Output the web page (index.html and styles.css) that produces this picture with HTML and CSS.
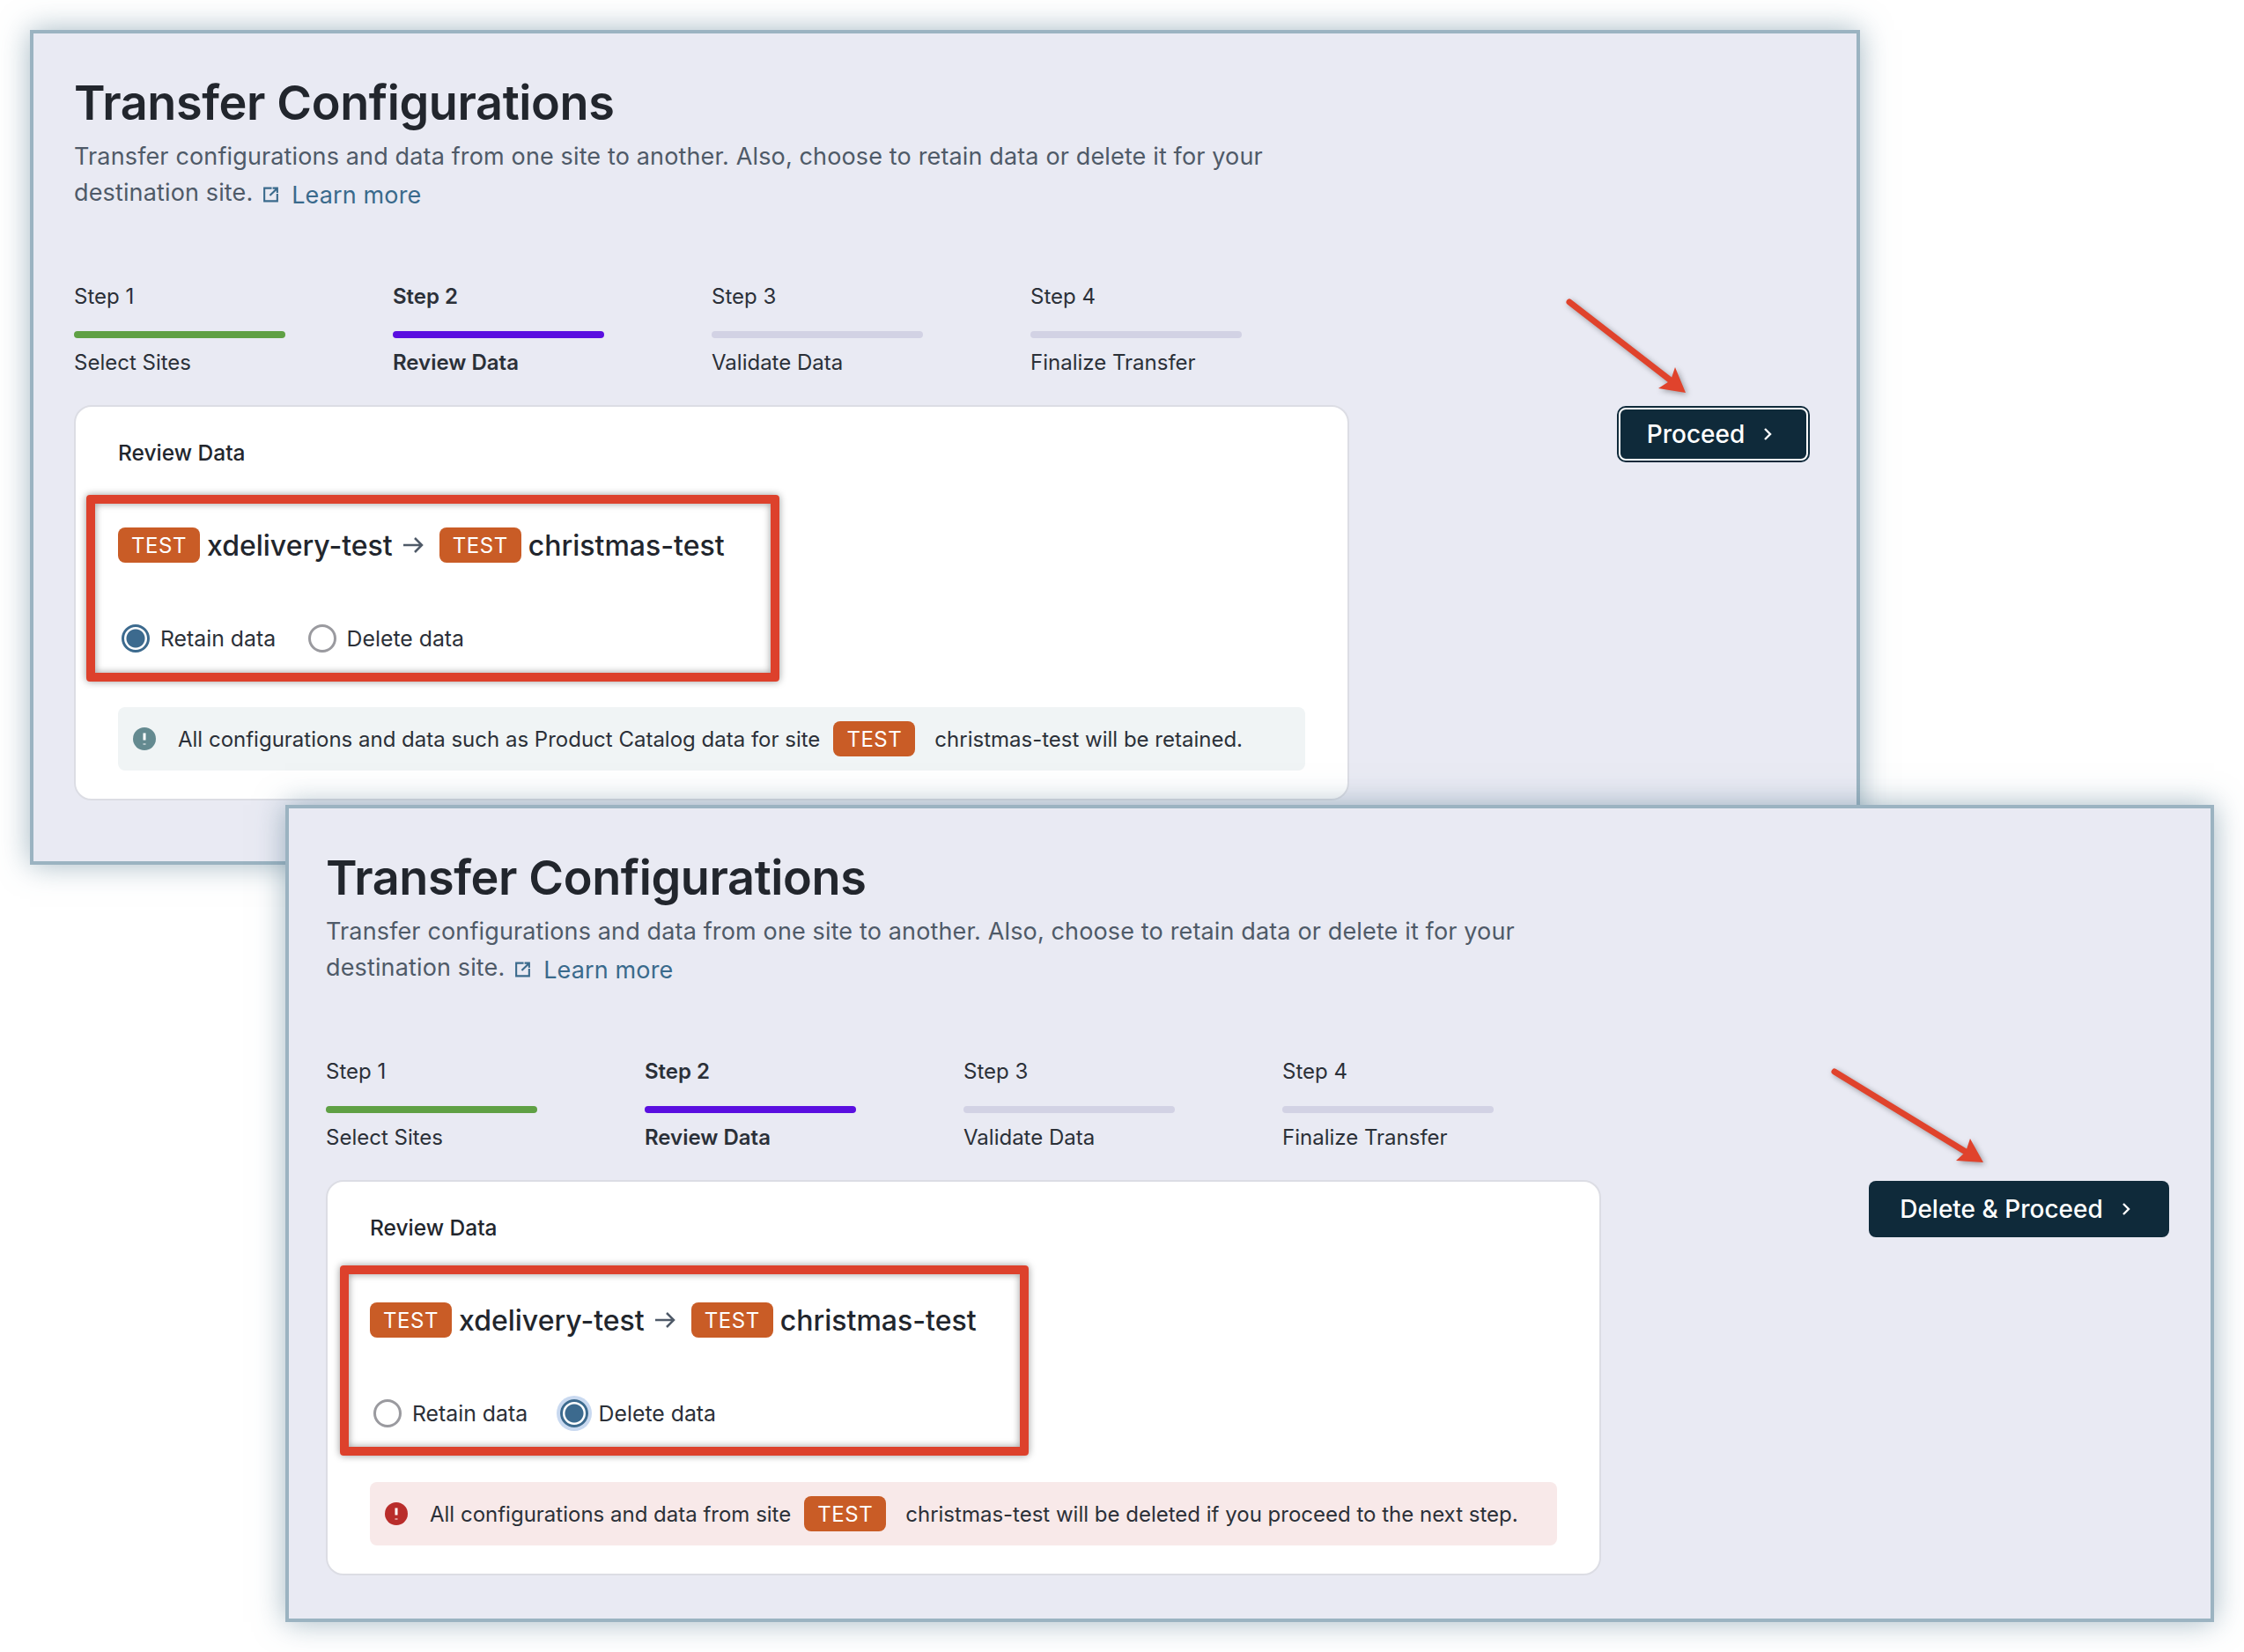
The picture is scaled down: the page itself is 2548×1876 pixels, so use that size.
FILE: index.html
```html
<!DOCTYPE html>
<html lang="en">

<head>
    <meta charset="UTF-8">
    <title>Transfer Configurations</title>
    <link rel="stylesheet" href="styles.css">
</head>

<body>
    <div class="window window-retain">
        <h1 class="title">Transfer Configurations</h1>
        <p class="intro">Transfer configurations and data from one site to another. Also, choose to retain data or delete it for your<br>destination site. <a class="learn" href="#"><svg class="ext" viewBox="0 0 20 20"><path d="M11 3H3v14h14V9M9 11l8-8M12 3h5v5"/></svg>Learn more</a></p>
        <div class="steps">
            <div class="step done"><p>Step 1</p><div class="bar"></div><p class="name">Select Sites</p></div>
            <div class="step active"><p>Step 2</p><div class="bar"></div><p class="name">Review Data</p></div>
            <div class="step"><p>Step 3</p><div class="bar"></div><p class="name">Validate Data</p></div>
            <div class="step"><p>Step 4</p><div class="bar"></div><p class="name">Finalize Transfer</p></div>
        </div>
        <div class="row">
            <div class="card">
                <h2 class="card-title">Review Data</h2>
                <div class="transfer">
                    <span class="badge">TEST</span><span class="site">xdelivery-test</span>
                    <svg class="to" viewBox="0 0 24 20"><path d="M1 10h21M14 2l8 8-8 8"/></svg>
                    <span class="badge">TEST</span><span class="site">christmas-test</span>
                </div>
                <div class="options">
                    <label class="option"><input class="radio" type="radio" name="a" checked>Retain data</label>
                    <label class="option"><input class="radio" type="radio" name="a">Delete data</label>
                </div>
                <div class="alert info">
                    <svg class="alert-icon" viewBox="0 0 26 26"><circle cx="13" cy="13" r="13"/><path d="M13 6.5v8M13 18.5v1"/></svg>
                    <span>All configurations and data such as Product Catalog data for site</span>
                    <span class="badge">TEST</span>
                    <span>christmas-test will be retained.</span>
                </div>
                <div class="mark"></div>
            </div>
            <button class="proceed ringed">Proceed<svg class="chev" viewBox="0 0 12 16"><path d="M3 2l6 6-6 6"/></svg></button>
        </div>
        <svg class="pointer" viewBox="0 0 160 130"><path class="shaft" d="M12 13L127 102"/><path class="tip" d="M144 116L132 87 127 102 113 111z"/></svg>
    </div>

    <div class="window window-delete">
        <h1 class="title">Transfer Configurations</h1>
        <p class="intro">Transfer configurations and data from one site to another. Also, choose to retain data or delete it for your<br>destination site. <a class="learn" href="#"><svg class="ext" viewBox="0 0 20 20"><path d="M11 3H3v14h14V9M9 11l8-8M12 3h5v5"/></svg>Learn more</a></p>
        <div class="steps">
            <div class="step done"><p>Step 1</p><div class="bar"></div><p class="name">Select Sites</p></div>
            <div class="step active"><p>Step 2</p><div class="bar"></div><p class="name">Review Data</p></div>
            <div class="step"><p>Step 3</p><div class="bar"></div><p class="name">Validate Data</p></div>
            <div class="step"><p>Step 4</p><div class="bar"></div><p class="name">Finalize Transfer</p></div>
        </div>
        <div class="row">
            <div class="card">
                <h2 class="card-title">Review Data</h2>
                <div class="transfer">
                    <span class="badge">TEST</span><span class="site">xdelivery-test</span>
                    <svg class="to" viewBox="0 0 24 20"><path d="M1 10h21M14 2l8 8-8 8"/></svg>
                    <span class="badge">TEST</span><span class="site">christmas-test</span>
                </div>
                <div class="options">
                    <label class="option"><input class="radio" type="radio" name="b">Retain data</label>
                    <label class="option"><input class="radio focused" type="radio" name="b" checked>Delete data</label>
                </div>
                <div class="alert danger">
                    <svg class="alert-icon" viewBox="0 0 26 26"><circle cx="13" cy="13" r="13"/><path d="M13 6.5v8M13 18.5v1"/></svg>
                    <span>All configurations and data from site</span>
                    <span class="badge">TEST</span>
                    <span>christmas-test will be deleted if you proceed to the next step.</span>
                </div>
                <div class="mark"></div>
            </div>
            <button class="proceed">Delete &amp; Proceed<svg class="chev" viewBox="0 0 12 16"><path d="M3 2l6 6-6 6"/></svg></button>
        </div>
        <svg class="pointer" viewBox="0 0 200 130"><path class="shaft" d="M13 12L162 103"/><path class="tip" d="M182 115L167 88 162 103 151 113z"/></svg>
    </div>
</body>

</html>
```
FILE: styles.css
```css
* {
    margin: 0;
    padding: 0;
    box-sizing: border-box;
    font-family: "Inter", "Liberation Sans", sans-serif;
}

body {
    background: #fff;
    height: 1876px;
    overflow: hidden;
    position: relative;
}

.window {
    position: absolute;
    background: #e9eaf3;
    border: 4px solid #9bb3c1;
    box-shadow: 0 0 32px rgba(90, 125, 145, 0.55);
    padding-top: 47px;
}

.window-retain {
    left: 34px;
    top: 34px;
    width: 2078px;
    height: 948px;
    padding-left: 46px;
    padding-right: 55px;
}

.window-delete {
    left: 324px;
    top: 914px;
    width: 2190px;
    height: 928px;
    padding-left: 42px;
    padding-right: 47px;
}

.title {
    font-size: 54px;
    line-height: 64px;
    font-weight: 600;
    color: #22262d;
    letter-spacing: -0.4px;
}

.intro {
    margin-top: 8px;
    font-size: 27px;
    line-height: 41px;
    letter-spacing: 0.14px;
    color: #4f5a68;
}

.learn {
    color: #3a6a8c;
    text-decoration: none;
    vertical-align: -3px;
}

.ext {
    width: 21px;
    height: 22px;
    margin: 0 13px 0 2px;
    vertical-align: -1px;
    fill: none;
    stroke: #3a6a8c;
    stroke-width: 2;
}

.steps {
    display: flex;
    gap: 122px;
    margin-top: 79px;
}

.step {
    width: 240px;
    font-size: 24px;
    line-height: 32px;
    color: #2b3038;
}

.bar {
    height: 8px;
    border-radius: 4px;
    margin-top: 23px;
    background: #d2d2e4;
}

.name {
    margin-top: 12px;
}

.done .bar {
    background: #5fa044;
}

.active .bar {
    background: #5a0fe0;
}

.active {
    font-weight: 600;
}

.row {
    display: flex;
    align-items: flex-start;
    justify-content: space-between;
    margin-top: 32px;
}

.card {
    position: relative;
    width: 1448px;
    height: 449px;
    background: #fff;
    border: 2px solid #dcdde4;
    border-radius: 20px;
    padding: 36px 48px 0;
}

.card-title {
    font-size: 24.5px;
    line-height: 32px;
    font-weight: 500;
    color: #22262d;
}

.transfer {
    display: flex;
    align-items: center;
    margin-top: 69px;
    height: 40px;
}

.badge {
    display: inline-block;
    width: 93px;
    height: 40px;
    line-height: 42px;
    border-radius: 8px;
    background: #c95c26;
    color: #fff;
    font-size: 24px;
    letter-spacing: 0.5px;
    text-align: center;
    flex-shrink: 0;
}

.site {
    margin-left: 8px;
    font-size: 32px;
    font-weight: 500;
    color: #22262d;
}

.to {
    width: 24px;
    height: 20px;
    margin: 0 18px 0 11px;
    fill: none;
    stroke: #4f5a68;
    stroke-width: 2.5;
}

.options {
    display: flex;
    gap: 36.5px;
    margin-top: 70px;
    padding-left: 4px;
}

.option {
    display: flex;
    align-items: center;
    gap: 12px;
    height: 32px;
    font-size: 24.8px;
    color: #2b3038;
}

.radio {
    appearance: none;
    width: 32px;
    height: 32px;
    border-radius: 50%;
    border: 3px solid #9a9a9f;
    background: #fff;
}

.radio:checked {
    border-color: #3c6a8e;
    background: radial-gradient(circle, #3c6a8e 0 10px, #fff 11px);
}

.focused {
    box-shadow: 0 0 0 4px #c9d9f0;
}

.alert {
    display: flex;
    align-items: center;
    height: 72px;
    margin-top: 62px;
    padding-left: 17px;
    border-radius: 8px;
    font-size: 24px;
    color: #2b3038;
}

.alert .badge {
    margin: 0 22px 0 15px;
}

.info {
    background: #f0f4f5;
}

.danger {
    background: #f8e9e9;
}

.alert-icon {
    width: 26px;
    height: 26px;
    margin-right: 25px;
    flex-shrink: 0;
    fill: #648a90;
    stroke: #fff;
    stroke-width: 3;
}

.alert-icon circle {
    stroke: none;
}

.danger .alert-icon {
    fill: #b92d2b;
}

.mark {
    position: absolute;
    left: 12px;
    top: 100px;
    width: 787px;
    height: 212px;
    border: 10px solid #dd412c;
    border-radius: 4px;
    box-shadow: 0 0 8px rgba(0, 0, 0, 0.4), inset 0 0 8px rgba(0, 0, 0, 0.4);
}

.window-delete .mark {
    left: 14px;
    top: 95px;
    width: 782px;
    height: 216px;
}

.proceed {
    display: flex;
    align-items: center;
    justify-content: center;
    gap: 20px;
    height: 64px;
    width: 341px;
    margin-top: 1px;
    padding-right: 8px;
    border: none;
    border-radius: 8px;
    background: #0f2a3a;
    color: #fff;
    font-size: 28px;
    font-weight: 500;
}

.ringed {
    width: 215px;
    height: 60px;
    margin-top: 3px;
    border: 2px solid #fff;
    box-shadow: 0 0 0 2px #0f2a3a;
}

.chev {
    width: 12px;
    height: 16px;
    fill: none;
    stroke: #fff;
    stroke-width: 2.4;
}

.pointer {
    position: absolute;
    filter: drop-shadow(2px 2px 3px rgba(0, 0, 0, 0.35));
}

.window-retain .pointer {
    left: 1732px;
    top: 292px;
    width: 160px;
    height: 130px;
}

.window-delete .pointer {
    left: 1742px;
    top: 287px;
    width: 200px;
    height: 130px;
}

.shaft {
    fill: none;
    stroke: #e0432c;
    stroke-width: 7;
    stroke-linecap: round;
}

.tip {
    fill: #e0432c;
}
```
